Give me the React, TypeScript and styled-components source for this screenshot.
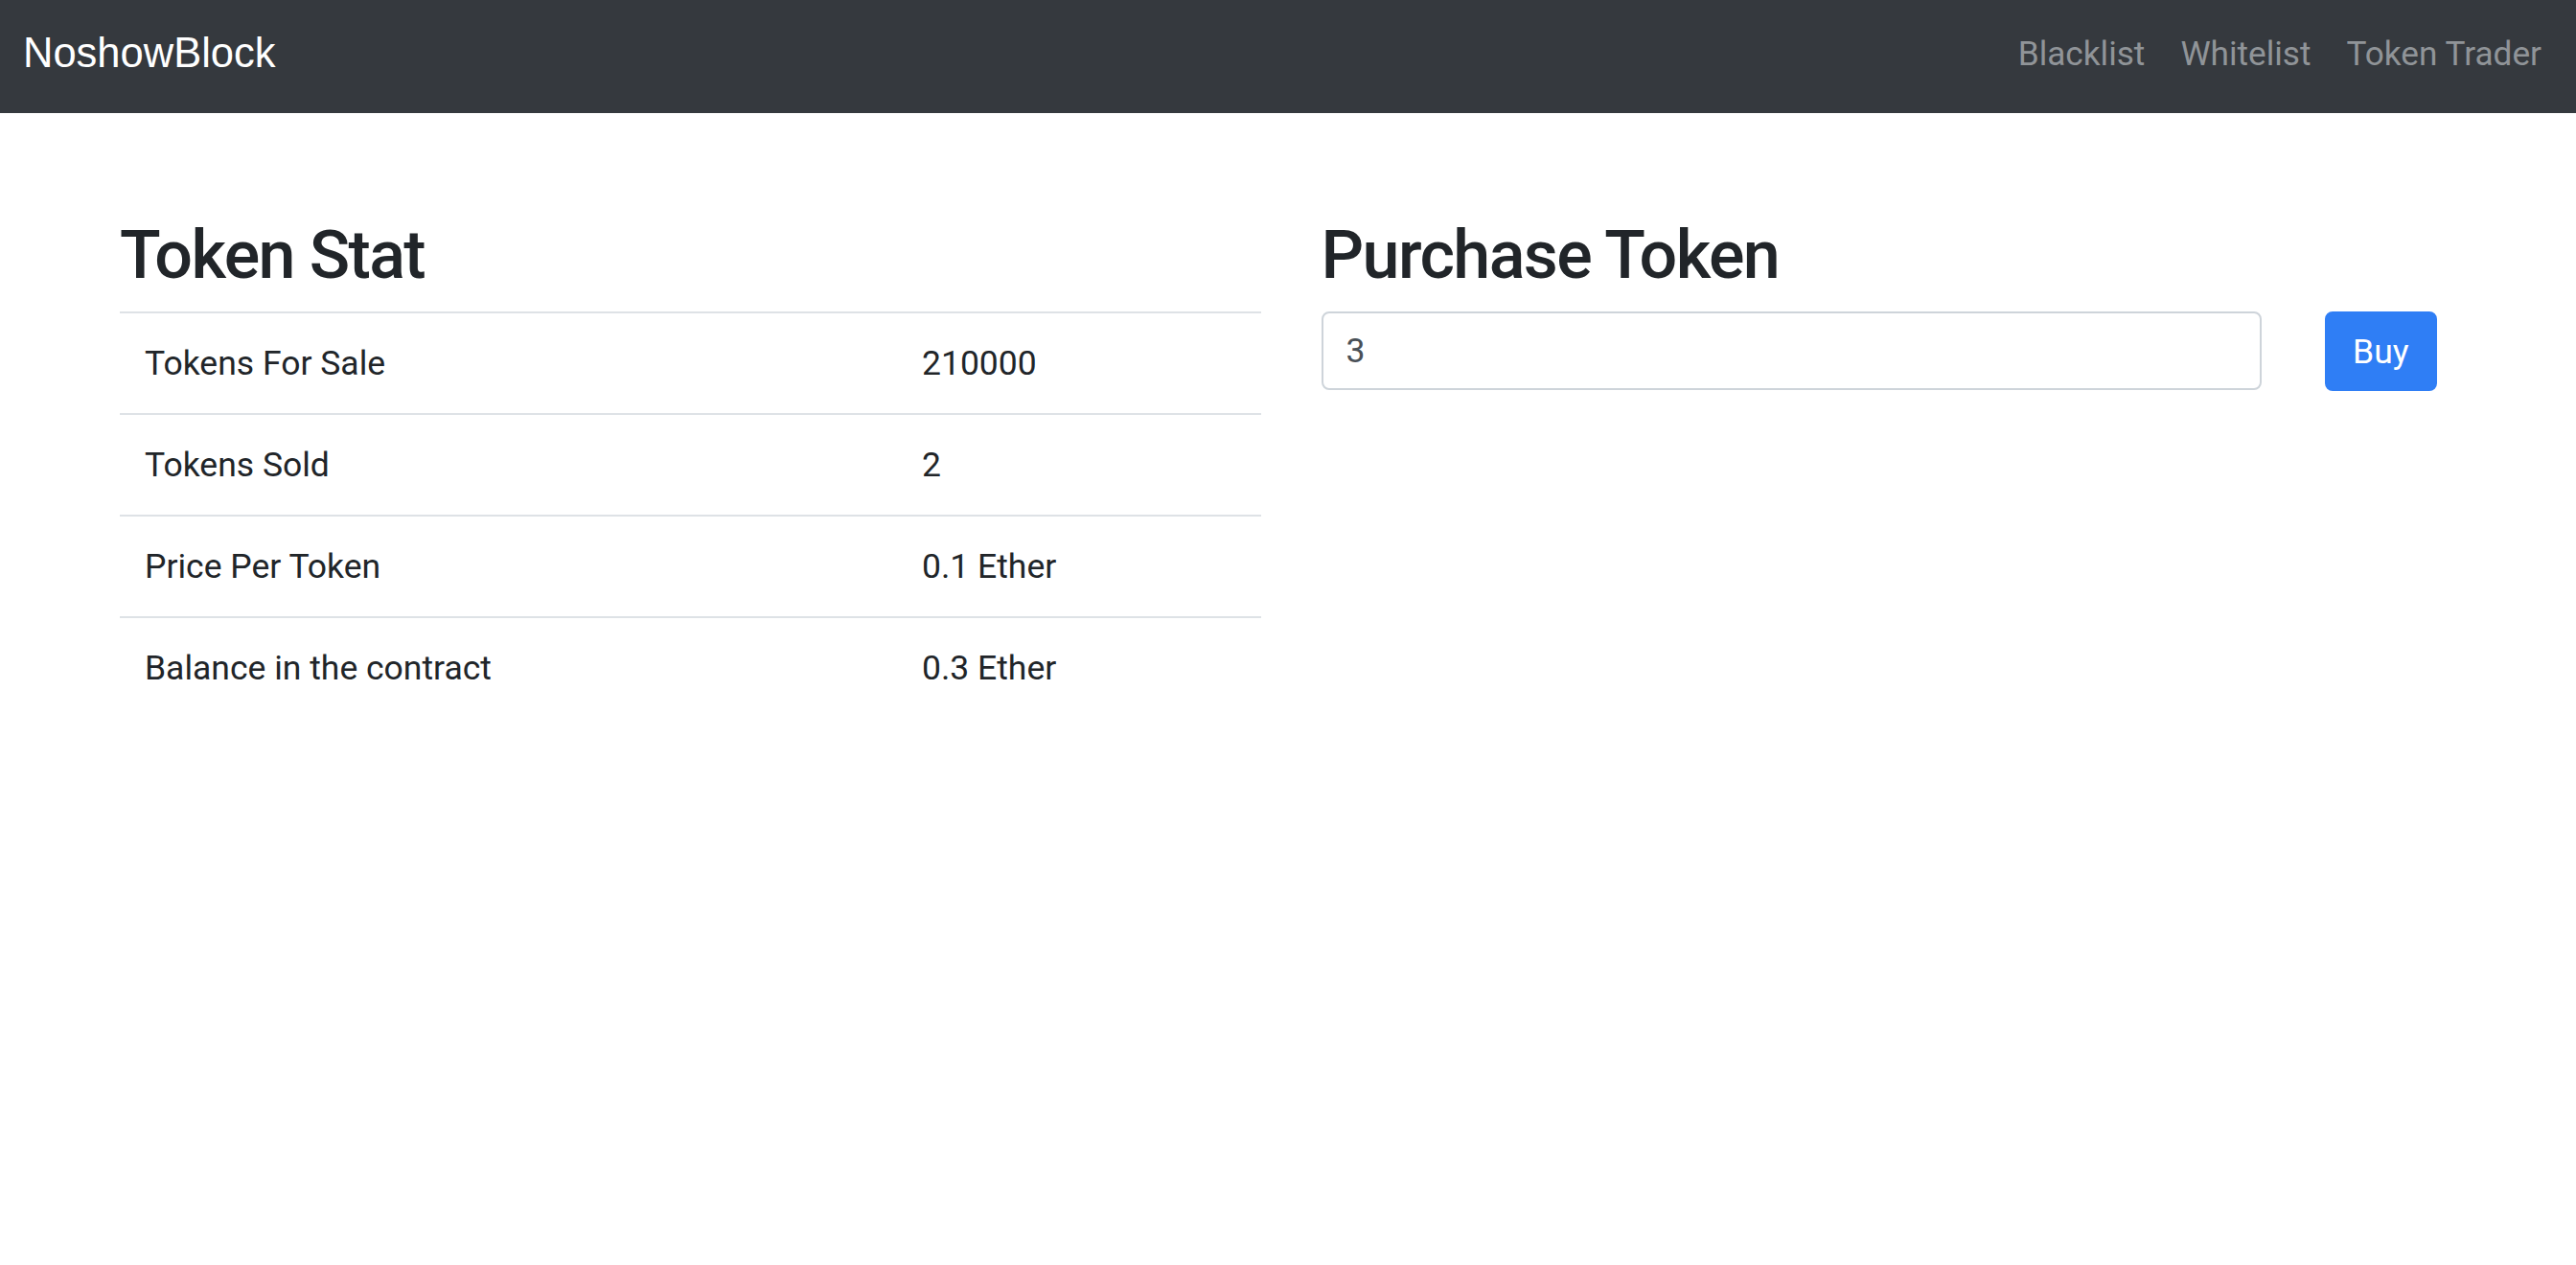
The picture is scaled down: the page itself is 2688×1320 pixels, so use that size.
import React from "react";
import styled, { createGlobalStyle } from "styled-components";

const GlobalStyle = createGlobalStyle`
  html, body { margin: 0; padding: 0; background: #ffffff; }
  body {
    font-family: Roboto, "Liberation Sans", Arial, sans-serif;
    font-size: 35.5px;
    line-height: 52px;
    color: #212529;
  }
  * { box-sizing: border-box; }
`;

const Navbar = styled.nav`
  height: 118px;
  background: #35393e;
  display: flex;
  align-items: center;
  justify-content: space-between;
  padding: 0 36px 0 24px;
`;

const Brand = styled.a`
  font-family: "Liberation Sans", Arial, Helvetica, sans-serif;
  font-size: 43.5px;
  line-height: 64px;
  color: #ffffff;
  text-decoration: none;
  margin-bottom: 8px;
`;

const NavList = styled.div`
  display: flex;
  gap: 37px;
  margin-bottom: 7px;
`;

const NavLink = styled.a`
  font-family: Roboto, Arial, sans-serif;
  font-size: 35.2px;
  line-height: 52px;
  color: #909498;
  text-decoration: none;
`;

const Main = styled.main`
  display: grid;
  grid-template-columns: 1fr 1fr;
  column-gap: 63px;
  padding: 106px 119px 0 125px;
`;

const Column = styled.section`
  display: flex;
  flex-direction: column;
`;

const Heading = styled.h2`
  margin: 0 0 17px 0;
  font-family: Roboto, Arial, sans-serif;
  font-weight: 500;
  font-size: 70px;
  line-height: 84px;
  letter-spacing: -1.6px;
  color: #212529;
`;

const Table = styled.table`
  width: 100%;
  border-collapse: collapse;
`;

const Cell = styled.td<{ $wide?: boolean }>`
  padding: 26px;
  border-top: 2px solid #dee2e6;
  font-size: 35.5px;
  line-height: 52px;
  color: #212529;
  width: ${(p) => (p.$wide ? "811px" : "auto")};
`;

const FormRow = styled.div`
  display: flex;
  margin: 0 -31.5px;
`;

const FieldCol = styled.div<{ $size: number }>`
  flex: 0 0 ${(p) => (p.$size / 12) * 100}%;
  max-width: ${(p) => (p.$size / 12) * 100}%;
  padding: 0 31.5px;
`;

const Input = styled.input`
  display: block;
  width: 100%;
  height: 82px;
  padding: 13px 24px;
  font-family: Roboto, Arial, sans-serif;
  font-size: 35.5px;
  line-height: 52px;
  color: #495057;
  background: #ffffff;
  border: 2px solid #ced4da;
  border-radius: 8px;
  outline: none;
`;

const BuyButton = styled.button`
  margin-left: 3px;
  height: 83px;
  padding: 0 27px;
  font-family: Roboto, Arial, sans-serif;
  font-size: 35.5px;
  line-height: 52px;
  color: #ffffff;
  background: #2f7ef5;
  border: 2px solid #2f7ef5;
  border-radius: 8px;
  cursor: pointer;
`;

const stats: [string, string][] = [
  ["Tokens For Sale", "210000"],
  ["Tokens Sold", "2"],
  ["Price Per Token", "0.1 Ether"],
  ["Balance in the contract", "0.3 Ether"],
];

export default function App() {
  return (
    <>
      <GlobalStyle />
      <Navbar>
        <Brand href="#">NoshowBlock</Brand>
        <NavList>
          <NavLink href="#">Blacklist</NavLink>
          <NavLink href="#">Whitelist</NavLink>
          <NavLink href="#">Token Trader</NavLink>
        </NavList>
      </Navbar>
      <Main>
        <Column>
          <Heading>Token Stat</Heading>
          <Table>
            <tbody>
              {stats.map(([label, value]) => (
                <tr key={label}>
                  <Cell $wide>{label}</Cell>
                  <Cell>{value}</Cell>
                </tr>
              ))}
            </tbody>
          </Table>
        </Column>
        <Column>
          <Heading>Purchase Token</Heading>
          <FormRow>
            <FieldCol $size={10}>
              <Input type="text" defaultValue="3" />
            </FieldCol>
            <FieldCol $size={2}>
              <BuyButton type="button">Buy</BuyButton>
            </FieldCol>
          </FormRow>
        </Column>
      </Main>
    </>
  );
}
